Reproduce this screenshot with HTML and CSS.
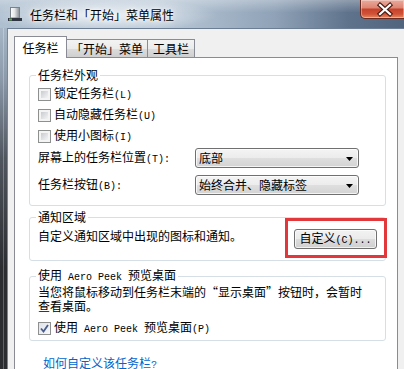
FILE: index.html
```html
<!DOCTYPE html>
<html lang="zh-CN">
<head>
    <meta charset="UTF-8" />
    <meta name="viewport" content="width=device-width, initial-scale=1.0" />
    <title>任务栏和「开始」菜单属性</title>
    <link rel="stylesheet" href="styles.css">
</head>
<body>

    <div class="window">
        <div class="titlebar">
            <svg class="app-icon" width="16" height="16" viewBox="0 0 16 16">
                <defs>
                    <linearGradient id="tower" x1="0" x2="1" y1="0" y2="0">
                        <stop offset="0" stop-color="#ffffff" />
                        <stop offset="0.45" stop-color="#e4e6e8" />
                        <stop offset="1" stop-color="#868c94" />
                    </linearGradient>
                </defs>
                <rect x="3.5" y="1.5" width="9" height="10.5" fill="url(#tower)" stroke="#7b8189" />
                <rect x="1" y="12" width="14" height="3" fill="#2e3540" />
                <rect x="2" y="12.5" width="3" height="2" fill="#5ea64c" />
            </svg>
            <span class="title">任务栏和「开始」菜单属性</span>
            <div class="close-btn">
                <svg width="44" height="19" viewBox="0 0 44 19">
                    <path d="M20 5 L30 14 M30 5 L20 14" stroke="#4a1c14" stroke-width="4.4" stroke-linecap="square" />
                    <path d="M20 5 L30 14 M30 5 L20 14" stroke="#fff" stroke-width="2.2" stroke-linecap="square" />
                </svg>
            </div>
        </div>

        <div class="frame">
            <div class="frame-edge"></div>
            <div class="client">
                <div class="tabs">
                    <div class="tab active" style="width: 53px">任务栏</div>
                    <div class="tab" style="width: 82px">「开始」菜单</div>
                    <div class="tab" style="width: 48px">工具栏</div>
                </div>

                <div class="panel">
                    <fieldset class="group group-look">
                        <legend>任务栏外观</legend>
                        <label class="check"><span class="box"></span><span>锁定任务栏<span class="en">(L)</span></span></label>
                        <label class="check"><span class="box"></span><span>自动隐藏任务栏<span class="en">(U)</span></span></label>
                        <label class="check"><span class="box"></span><span>使用小图标<span class="en">(I)</span></span></label>
                        <div class="field field-pos">
                            <span class="field-label">屏幕上的任务栏位置<span class="en">(T):</span></span>
                            <div class="select"><span>底部</span><svg class="arrow" width="7" height="4" viewBox="0 0 7 4"><path d="M0 0 H7 L3.5 4 Z" fill="#000" /></svg></div>
                        </div>
                        <div class="field field-buttons">
                            <span class="field-label">任务栏按钮<span class="en">(B):</span></span>
                            <div class="select"><span>始终合并、隐藏标签</span><svg class="arrow" width="7" height="4" viewBox="0 0 7 4"><path d="M0 0 H7 L3.5 4 Z" fill="#000" /></svg></div>
                        </div>
                    </fieldset>

                    <fieldset class="group group-notify">
                        <legend>通知区域</legend>
                        <div class="notify-row">
                            <span>自定义通知区域中出现的图标和通知。</span>
                            <span class="highlight"><button class="btn">自定义<span class="en">(C)...</span></button></span>
                        </div>
                    </fieldset>

                    <fieldset class="group group-peek">
                        <legend>使用<span class="en"> Aero Peek </span>预览桌面</legend>
                        <p class="peek-text">当您将鼠标移动到任务栏末端的“显示桌面”按钮时，会暂时<br>查看桌面。</p>
                        <label class="check check-peek">
                            <span class="box checked">
                                <svg width="11" height="11" viewBox="0 0 11 11"><path d="M2 5.5 L4.5 8.5 L9 2" fill="none" stroke="#4a5c8c" stroke-width="1.8" /></svg>
                            </span>
                            <span>使用<span class="en"> Aero Peek </span>预览桌面<span class="en">(P)</span></span>
                        </label>
                    </fieldset>

                    <a class="help-link" href="#">如何自定义该任务栏<span class="en">?</span></a>
                </div>
            </div>
        </div>
    </div>

</body>
</html>
```

FILE: styles.css
```css
:root {
    --face: #f0f0f0;
    --tab-border: #898c95;
    --group-border: #d5dfe5;
    --ctrl-border: #707070;
    --link: #0066cc;
    --mark: #e2383c;
}

* {
    box-sizing: border-box;
}

html, body {
    margin: 0;
    padding: 0;
}

body {
    width: 404px;
    height: 369px;
    overflow: hidden;
    font: 12px/14px "Noto Sans CJK SC", sans-serif;
    color: #000;
    background: #2a2c30;
}

.en {
    font-family: "Liberation Mono", monospace;
    font-size: 10px;
}

.window {
    display: flex;
    flex-direction: column;
    height: 100%;
}

/* title bar (aero glass) */
.titlebar {
    flex: none;
    height: 28px;
    display: flex;
    align-items: center;
    padding-left: 7px;
    background:
        radial-gradient(ellipse 115px 17px at 102px 15px, rgba(255,255,255,0.8), rgba(255,255,255,0)),
        linear-gradient(rgba(255,255,255,0.3), rgba(255,255,255,0) 45%),
        linear-gradient(90deg, #aebfd0 0, #b9c8d7 40%, #8fa2b7 68%, #5f738c 86%, #50647d 100%);
}

    .titlebar .title {
        margin-left: 7px;
        padding-top: 2px;
        text-shadow: 0 0 6px #fff, 0 0 3px #fff;
    }

.close-btn {
    margin-left: auto;
    align-self: flex-start;
    width: 44px;
    height: 19px;
    border: 1px solid #6a2a20;
    border-top: none;
    border-right: none;
    border-radius: 0 0 0 5px;
    background: linear-gradient(#eaaa9c 0, #de8775 42%, #c8432b 52%, #cf5237 78%, #e48a60 100%);
    box-shadow: inset 0 0 0 1px rgba(255,255,255,0.35);
}

    .close-btn svg {
        display: block;
        margin-left: -1px;
    }

/* window body */
.frame {
    flex: 1;
    display: flex;
    min-height: 0;
}

.frame-edge {
    flex: none;
    width: 7px;
    background:
        linear-gradient(90deg, transparent 3px, rgba(255,255,255,0.25) 3px, rgba(255,255,255,0.25) 4px, transparent 4px),
        linear-gradient(#a6b6c7 0, #8c9aab 50px, #50565e 130px, #2b2d31 240px);
}

.client {
    flex: 1;
    background: var(--face);
    border-left: 1px solid #7d858e;
    border-top: 1px solid #6c7e93;
    padding: 7px 6px 0 6px;
}

/* tabs */
.tabs {
    display: flex;
    align-items: flex-end;
    height: 21px;
}

.tab {
    position: relative;
    height: 18px;
    margin-left: -1px;
    display: flex;
    align-items: center;
    justify-content: center;
    border: 1px solid var(--tab-border);
    border-bottom: none;
    background: linear-gradient(#f3f3f3, #ebebeb 50%, #dddddd 50%, #cfcfcf);
    white-space: nowrap;
}

    .tab.active {
        z-index: 2;
        height: 22px;
        margin-left: 0;
        margin-bottom: -1px;
        background: #fff;
    }

.panel {
    height: 340px;
    background: #fff;
    border: 1px solid var(--tab-border);
    padding: 0 11px 0 14px;
}

/* group boxes */
.group {
    margin: 0;
    min-width: 0;
    border: 1px solid var(--group-border);
    border-radius: 3px;
    padding: 0 8px;
}

    .group legend {
        padding: 0 2px;
        margin-left: -2px;
        line-height: 14px;
    }

.group-look {
    margin-top: 10px;
    padding-top: 2px;
    padding-bottom: 10px;
}

.group-notify {
    margin-top: 4px;
    padding-top: 5px;
    padding-bottom: 11px;
}

.group-peek {
    margin-top: 7px;
    padding-bottom: 5px;
}

/* checkboxes */
.check {
    display: flex;
    align-items: center;
    height: 21px;
    white-space: nowrap;
}

.box {
    flex: none;
    width: 13px;
    height: 13px;
    margin-right: 3px;
    border: 1px solid #8e8f8f;
    padding: 2px;
    background: linear-gradient(135deg, #c8cbd0, #f4f4f4) content-box, #f4f4f4;
}

    .box.checked {
        padding: 0;
        background: linear-gradient(135deg, #dfe3ea, #f7f8fa);
    }

        .box.checked svg {
            display: block;
        }

.check-peek {
    height: 13px;
    margin-top: 9px;
}

/* combo boxes */
.field {
    display: flex;
    align-items: center;
    height: 20px;
    white-space: nowrap;
}

.field-pos {
    margin-top: 1px;
}

.field-buttons {
    margin-top: 7px;
}

.field-label {
    width: 157px;
}

.select {
    width: 164px;
    height: 20px;
    display: flex;
    align-items: center;
    padding: 0 5px 0 3px;
    border: 1px solid var(--ctrl-border);
    border-radius: 3px;
    background: linear-gradient(#f4f4f4, #ececec 50%, #dfdfdf 50%, #d3d3d3);
    box-shadow: inset 0 0 0 1px rgba(255,255,255,0.75);
}

    .select .arrow {
        margin-left: auto;
        margin-top: 1px;
    }

/* notification area */
.notify-row {
    display: flex;
    justify-content: space-between;
    align-items: flex-start;
    white-space: nowrap;
}

.highlight {
    position: relative;
    display: block;
}

    .highlight::after {
        content: "";
        position: absolute;
        top: -11px;
        left: -9px;
        right: -10px;
        bottom: -9px;
        border: 3px solid var(--mark);
    }

.btn {
    display: block;
    width: 83px;
    height: 20px;
    padding: 0;
    font: inherit;
    color: #000;
    border: 1px solid var(--ctrl-border);
    border-radius: 3px;
    background: linear-gradient(#f2f2f2, #ebebeb 50%, #dddddd 50%, #cfcfcf);
    box-shadow: inset 0 0 0 1px rgba(255,255,255,0.7);
}

/* aero peek */
.peek-text {
    margin: 0;
    line-height: 14px;
    white-space: nowrap;
}

.help-link {
    display: inline-block;
    margin: 15px 0 0 14px;
    color: var(--link);
    text-decoration: none;
}
```
